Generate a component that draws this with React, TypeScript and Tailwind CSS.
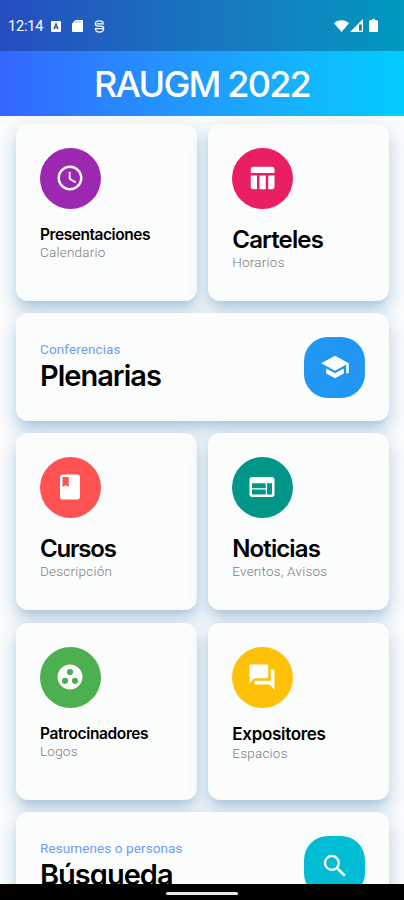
import type { ReactNode } from 'react';
import {
  MdAccessTime,
  MdBook,
  MdForum,
  MdGroupWork,
  MdSchool,
  MdSearch,
  MdTableChart,
  MdWeb,
} from 'react-icons/md';

const cardStyle =
  'rounded-xl bg-[#fbfcfc] shadow-[0_7px_8px_-4px_rgba(50,110,160,0.24),0_12px_17px_2px_rgba(50,125,175,0.13),0_5px_18px_3px_rgba(50,125,175,0.12)]';

interface SmallCardProps {
  icon: ReactNode;
  color: string;
  title: string;
  titleClass: string;
  subtitle: string;
}

function SmallCard({ icon, color, title, titleClass, subtitle }: SmallCardProps) {
  return (
    <div className={`${cardStyle} flex flex-col items-start p-6`}>
      <div className={`${color} mb-4 flex size-[61px] shrink-0 items-center justify-center rounded-full pr-px pb-px text-white`}>
        {icon}
      </div>
      <h2 className={`${titleClass} font-semibold whitespace-nowrap text-black`}>{title}</h2>
      <p className="font-[Roboto,sans-serif] text-[13.5px] leading-[17px] font-light tracking-[0.22px] whitespace-nowrap text-[#7c7c7c]">
        {subtitle}
      </p>
    </div>
  );
}

interface WideCardProps {
  icon: ReactNode;
  color: string;
  label: string;
  title: string;
}

function WideCard({ icon, color, label, title }: WideCardProps) {
  return (
    <div className={`${cardStyle} col-span-2 flex items-start justify-between p-6`}>
      <div className="pt-1">
        <p className="font-[Roboto,sans-serif] text-[13.5px] leading-[17px] tracking-[0.1px] whitespace-nowrap text-[#6f9bfa]">
          {label}
        </p>
        <h2 className="text-[29px] leading-[35px] font-semibold tracking-[-1px] whitespace-nowrap text-black">
          {title}
        </h2>
      </div>
      <div className={`${color} flex size-[61px] items-center justify-center rounded-3xl pb-px pl-px text-white`}>
        {icon}
      </div>
    </div>
  );
}

function StatusBar() {
  return (
    <div className="flex h-[51px] items-center justify-between bg-black/25 pr-[26px] pl-2 text-white">
      <div className="flex items-center pt-px">
        <span className="w-9 pt-px font-[Roboto,sans-serif] text-[14.5px] leading-4 tracking-[-0.2px]">12:14</span>
        <svg className="ml-[7px]" width="10" height="11" viewBox="0 0 10 11">
          <rect width="10" height="11" rx="1" fill="currentColor" />
          <path d="M2.8 8.3 5 2.7l2.2 5.6M3.6 6.6h2.8" fill="none" stroke="#29539f" strokeWidth="1.2" />
        </svg>
        <svg className="ml-[11px]" width="11" height="12" viewBox="0 0 11 12">
          <path d="M3.5 0H10a1 1 0 0 1 1 1v10a1 1 0 0 1-1 1H1a1 1 0 0 1-1-1V3.5z" fill="currentColor" />
          <path d="M4 1.2v1.6M6 1.2v1.6M8 1.2v1.6" stroke="#6c8fd0" strokeWidth=".8" />
        </svg>
        <svg className="ml-[11px]" width="11" height="13" viewBox="0 0 11 13" fill="none" stroke="currentColor" strokeWidth="1.3">
          <path d="M9.5 2.6C8.6 1.3 7.2.8 5.500.8 3 .8 1.3 1.9 1.3 3.7c0 1.6 1 2.4 2.600 2.400h3.200c1.600 0 2.600.9 2.600 2.500 0 2.300-1.700 3.500-4.200 3.500S1.300 10.900 1.300 8.600" />
          <path d="M2.5 3.8h7.500M1 8.600h8.500" />
        </svg>
      </div>
      <div className="flex items-center">
        <svg width="15" height="12" viewBox="0 0 15 12">
          <path d="M7.5 12 0 3.2C1.8 1.3 4.5.2 7.5.2s5.7 1.1 7.5 3z" fill="currentColor" />
        </svg>
        <svg className="ml-px" width="13" height="13" viewBox="0 0 13 13">
          <path d="M13 0v13H0z" fill="currentColor" />
          <path d="M9 5.5h2.8v6.2H9z" fill="#0b82b8" />
        </svg>
        <svg className="ml-1.5" width="9" height="13" viewBox="0 0 9 13">
          <path d="M3 0h3v1.3h2a1 1 0 0 1 1 1V12a1 1 0 0 1-1 1H1a1 1 0 0 1-1-1V2.3a1 1 0 0 1 1-1h2z" fill="currentColor" />
        </svg>
      </div>
    </div>
  );
}

export default function App() {
  return (
    <div className="flex h-[900px] w-full flex-col overflow-hidden bg-[#fbfcfd] font-[Inter,sans-serif]">
      <header className="shrink-0 bg-linear-to-r from-[#3366ff] to-[#00ccff]">
        <StatusBar />
        <div className="flex h-[65px] items-center justify-center">
          <h1 className="text-[36px] leading-none font-medium tracking-[-1.8px] whitespace-nowrap text-white">
            RAUGM 2022
          </h1>
        </div>
      </header>

      <main className="min-h-0 flex-1 overflow-hidden pt-2 pr-[15px] pl-4">
        <div className="grid grid-cols-[180.5px_1fr] grid-rows-[177px_108px_177px_177px_108px] gap-x-[11.8px] gap-y-[12.2px]">
          <SmallCard
            icon={<MdAccessTime size={30} />}
            color="bg-[#9c27b0]"
            title="Presentaciones"
            titleClass="text-[15.5px] leading-[19px] tracking-[-0.45px]"
            subtitle="Calendario"
          />
          <SmallCard
            icon={<MdTableChart size={30} />}
            color="bg-[#e91e63]"
            title="Carteles"
            titleClass="text-[24px] leading-[29px] tracking-[-0.85px]"
            subtitle="Horarios"
          />
          <WideCard
            icon={<MdSchool size={30} />}
            color="bg-[#2196f3]"
            label="Conferencias"
            title="Plenarias"
          />
          <SmallCard
            icon={<MdBook size={30} />}
            color="bg-[#ff5252]"
            title="Cursos"
            titleClass="text-[24px] leading-[29px] tracking-[-1.2px]"
            subtitle="Descripción"
          />
          <SmallCard
            icon={<MdWeb size={30} />}
            color="bg-[#009688]"
            title="Noticias"
            titleClass="text-[24px] leading-[29px] tracking-[-0.9px]"
            subtitle="Eventos, Avisos"
          />
          <SmallCard
            icon={<MdGroupWork size={30} />}
            color="bg-[#4caf50]"
            title="Patrocinadores"
            titleClass="text-[15.5px] leading-[19px] tracking-[-0.38px]"
            subtitle="Logos"
          />
          <SmallCard
            icon={<MdForum size={30} />}
            color="bg-[#ffc107]"
            title="Expositores"
            titleClass="text-[17px] leading-[21px] tracking-[-0.3px]"
            subtitle="Espacios"
          />
          <WideCard
            icon={<MdSearch size={30} />}
            color="bg-[#00bcd4]"
            label="Resumenes o personas"
            title="Búsqueda"
          />
        </div>
      </main>

      <footer className="flex h-4 shrink-0 items-center justify-center bg-black pt-0.5">
        <div className="h-[3px] w-[72px] rounded-full bg-[#e8e8e8]" />
      </footer>
    </div>
  );
}
